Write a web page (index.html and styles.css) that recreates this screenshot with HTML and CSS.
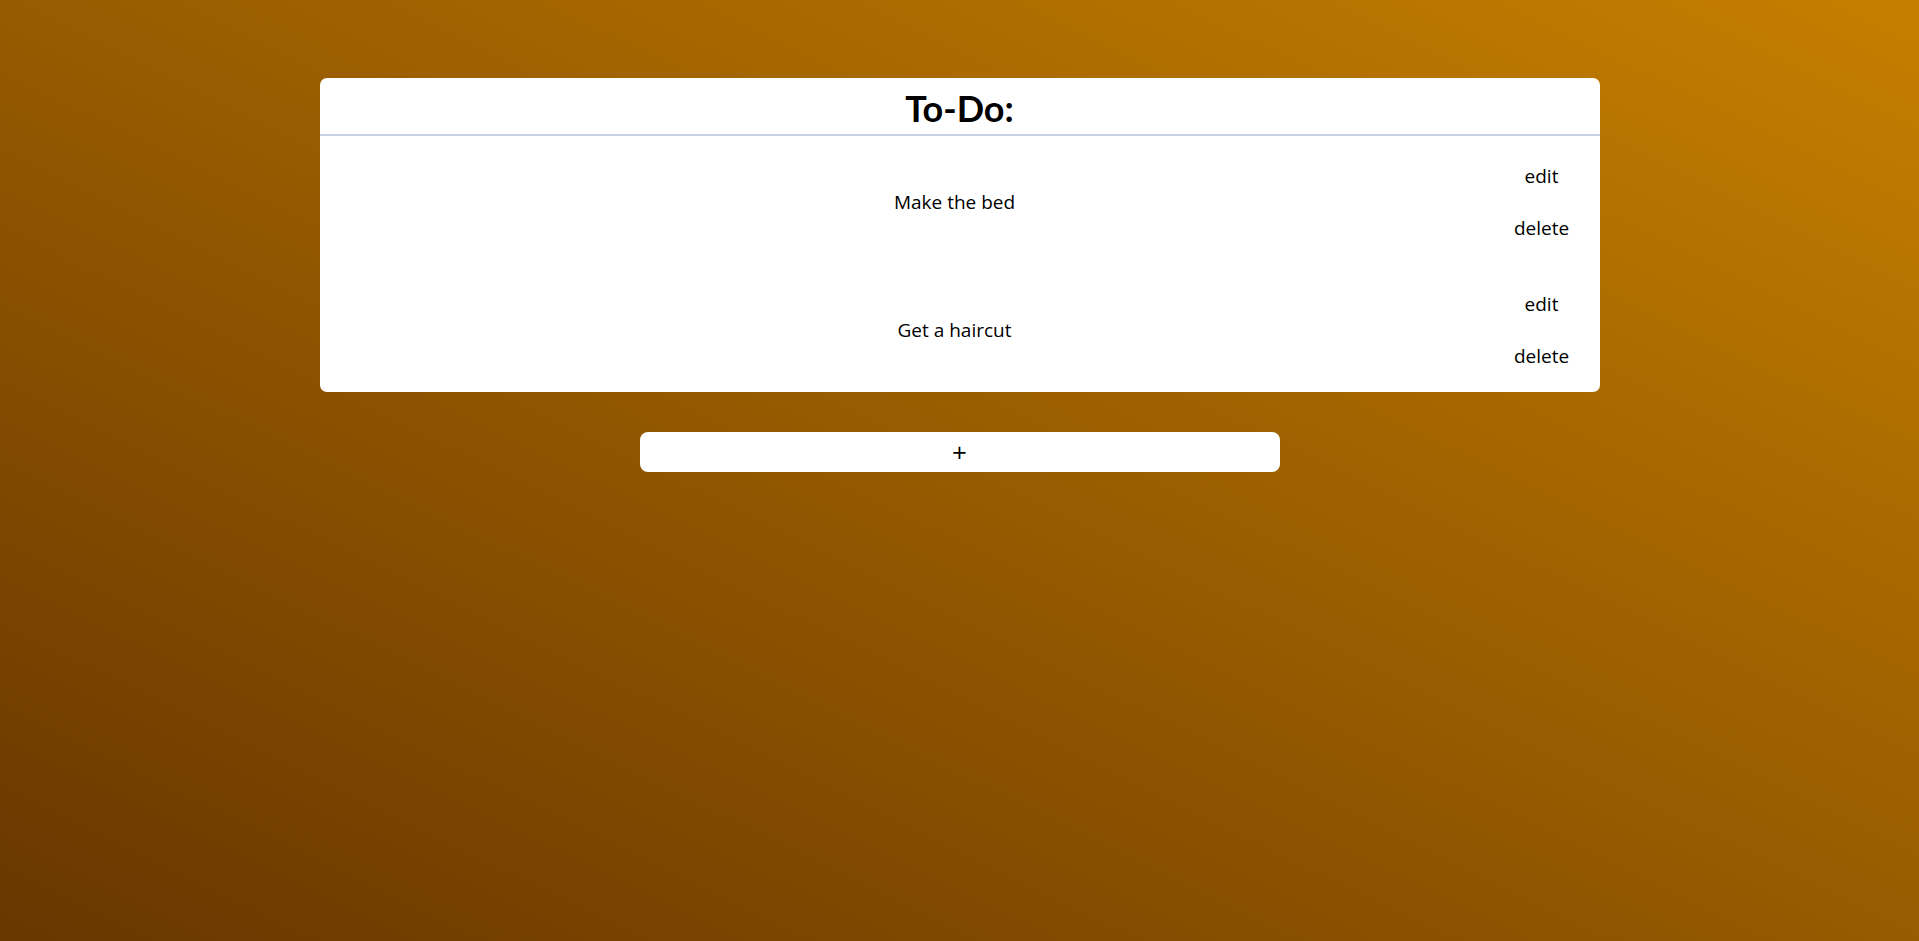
FILE: index.html
```html
<!DOCTYPE html>
<html lang="en">
<head>
<meta charset="utf-8">
<title>To-Do</title>
<link rel="stylesheet" href="styles.css">
</head>
<body>
<main class="app">
  <section class="card">
    <h1 class="card-title">To-Do:</h1>
    <ul class="todo-list">
      <li class="todo">
        <span class="todo-text">Make the bed</span>
        <div class="todo-actions">
          <button class="action">edit</button>
          <button class="action">delete</button>
        </div>
      </li>
      <li class="todo">
        <span class="todo-text">Get a haircut</span>
        <div class="todo-actions">
          <button class="action">edit</button>
          <button class="action">delete</button>
        </div>
      </li>
    </ul>
  </section>
  <button class="add-btn">+</button>
</main>
</body>
</html>
```

FILE: styles.css
```css
html, body {
  margin: 0;
  padding: 0;
}

body {
  min-height: 100vh;
  background: linear-gradient(to top right, #683600, #c57f00);
  font-family: "Open Sans", "Noto Sans", sans-serif;
  color: #000;
}

.app {
  display: flex;
  flex-direction: column;
  align-items: center;
  padding-top: 78px;
  gap: 40px;
}

.card {
  width: 1280px;
  background: #fff;
  border-radius: 7px;
  overflow: hidden;
}

.card-title {
  margin: 0;
  padding: 9px 0 4px;
  font-family: Lato, "Open Sans", sans-serif;
  font-weight: 700;
  font-size: 36px;
  line-height: 43px;
  text-align: center;
  border-bottom: 2px solid #c8d4e4;
}

.todo-list {
  list-style: none;
  margin: 0;
  padding: 0;
}

.todo {
  display: grid;
  grid-template-columns: 1fr 116px;
  align-items: center;
  padding: 14px 0 10px;
}

.todo-text {
  padding-left: 106px;
  text-align: center;
  font-size: 19px;
  line-height: 26px;
}

.todo-actions {
  display: flex;
  flex-direction: column;
  align-items: center;
}

.action {
  background: none;
  border: none;
  padding: 13px 0;
  margin: 0;
  font-family: "Open Sans", "Noto Sans", sans-serif;
  font-size: 19px;
  line-height: 26px;
  color: #000;
  cursor: pointer;
}

.add-btn {
  width: 640px;
  height: 40px;
  border: none;
  border-radius: 8px;
  background: #fff;
  font-family: "Open Sans", "Noto Sans", sans-serif;
  font-size: 26px;
  line-height: 40px;
  padding: 0;
  color: #000;
  cursor: pointer;
}
```
